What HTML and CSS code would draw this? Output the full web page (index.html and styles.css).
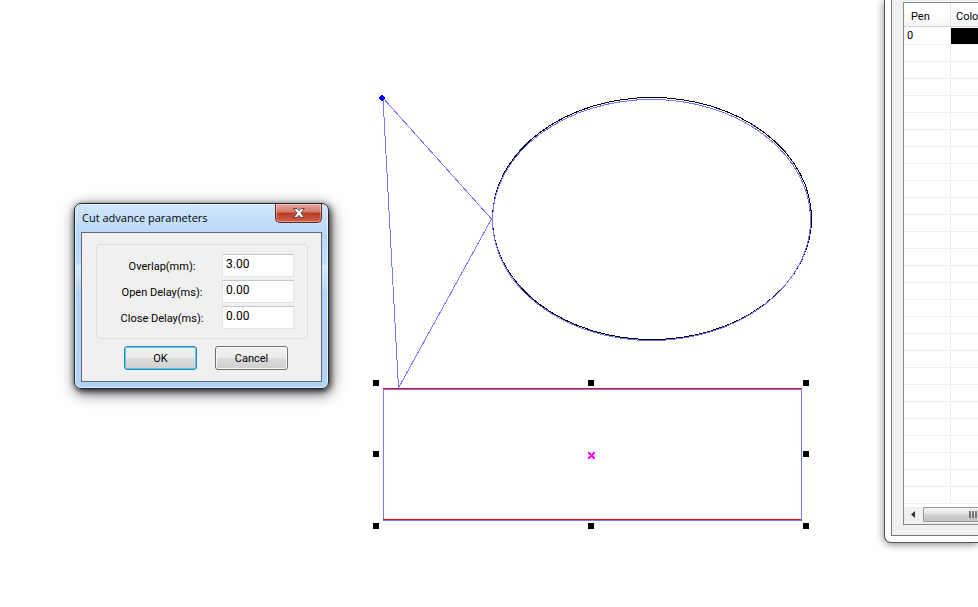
FILE: index.html
```html
<!DOCTYPE html>
<html lang="en">
<head>
<meta charset="utf-8">
<title>Cut advance parameters</title>
<link rel="stylesheet" href="styles.css">
</head>
<body>
<main class="workspace">
  <svg class="drawing" shape-rendering="crispEdges" fill="none" aria-label="Drawing">
    <ellipse cx="652" cy="218.500" rx="159.500" ry="121" stroke="#000"/>
    <ellipse cx="651.500" cy="220" rx="159" ry="120.500" stroke="#7878ff"/>
    <path d="M383 98L491.500 219L398.500 388L383 98" stroke="#7878ff"/>
    <path d="M383.500 389.500H801.500V520.500H383.500Z" stroke="#7878ff"/>
    <path d="M383 388.500H802M383 519.500H801" stroke="#f00"/>
    <path d="M381 95h2v1h1v1h1v2h-1v1h-1v1h-2v-1h-1v-1h-1v-2h1v-1h1z" fill="#00f"/>
    <path fill="#000" d="M373 380h6v6h-6zM588 380h6v6h-6zM803 380h6v6h-6zM373 451h6v6h-6zM803 451h6v6h-6zM373 523h6v6h-6zM588 523h6v6h-6zM803 523h6v6h-6z"/>
    <path fill="#f0f" d="M588 452h2v1h1v1h1v-1h1v-1h2v2h-1v1h-1v1h1v1h1v2h-2v-1h-1v-1h-1v1h-1v1h-2v-2h1v-1h1v-1h-1v-1h-1z"/>
  </svg>

  <form class="dialog" role="dialog" aria-labelledby="dialog-title">
    <header class="titlebar">
      <h1 class="title" id="dialog-title">Cut advance parameters</h1>
      <button class="close" type="button" aria-label="Close">
        <svg width="14" height="10" viewBox="0 0 14 10"><path d="M1.500 .5h3.500L7 2.700 9 .5h3.500L9 5l3.500 4.500H9L7 7.300 5 9.500H1.500L5 5z" fill="#fff" stroke="#5a4448"/></svg>
      </button>
    </header>
    <div class="client">
      <div class="group">
        <label for="overlap">Overlap(mm):</label>
        <input id="overlap" type="text" value="3.00">
        <label for="open-delay">Open Delay(ms):</label>
        <input id="open-delay" type="text" value="0.00">
        <label for="close-delay">Close Delay(ms):</label>
        <input id="close-delay" type="text" value="0.00">
      </div>
      <div class="actions">
        <button class="button primary" type="button">OK</button>
        <button class="button" type="button">Cancel</button>
      </div>
    </div>
  </form>

  <aside class="panel">
    <div class="panel-client">
      <div class="list">
        <table class="pens">
          <thead><tr><th class="pen">Pen</th><th>Colo</th></tr></thead>
          <tbody>
            <tr><td>0</td><td><div class="swatch"></div></td></tr>
            <tr><td></td><td></td></tr><tr><td></td><td></td></tr><tr><td></td><td></td></tr>
            <tr><td></td><td></td></tr><tr><td></td><td></td></tr><tr><td></td><td></td></tr>
            <tr><td></td><td></td></tr><tr><td></td><td></td></tr><tr><td></td><td></td></tr>
            <tr><td></td><td></td></tr><tr><td></td><td></td></tr><tr><td></td><td></td></tr>
            <tr><td></td><td></td></tr><tr><td></td><td></td></tr><tr><td></td><td></td></tr>
            <tr><td></td><td></td></tr><tr><td></td><td></td></tr><tr><td></td><td></td></tr>
            <tr><td></td><td></td></tr><tr><td></td><td></td></tr><tr><td></td><td></td></tr>
            <tr><td></td><td></td></tr><tr><td></td><td></td></tr><tr><td></td><td></td></tr>
            <tr><td></td><td></td></tr><tr><td></td><td></td></tr><tr><td></td><td></td></tr>
          </tbody>
        </table>
        <div class="scrollbar">
          <button class="arrow" type="button" aria-label="Scroll left"><svg width="4" height="7" viewBox="0 0 4 7"><path d="M4 0v7L0 3.500z" fill="#333"/></svg></button>
          <div class="thumb"><svg width="12" height="7" viewBox="0 0 12 7" shape-rendering="crispEdges"><path d="M0 0h2v7H0zM3 0h2v7H3zM6 0h2v7H6zM9 0h2v7H9z" fill="#777"/></svg></div>
        </div>
      </div>
    </div>
  </aside>
</main>
</body>
</html>
```
FILE: styles.css
```css
* {
  box-sizing: border-box;
}

body {
  margin: 0;
  background: #fff;
  color: #000;
  font-family: Roboto, "Liberation Sans", Arial, sans-serif;
  font-size: 11px;
}

button,
input {
  font: inherit;
  color: inherit;
}

.workspace {
  position: relative;
  height: 100vh;
  overflow: hidden;
}

.drawing {
  display: block;
  width: 100%;
  height: 100%;
}

/* Floating dialog */
.dialog {
  position: absolute;
  left: 74px;
  top: 203px;
  width: 255px;
  padding: 0 6px 6px;
  border: 1px solid #1c2733;
  border-radius: 7px;
  background: linear-gradient(#d2e6fb, #b9d8f8 30px, #bddbfa 60px, #d8ebfd 62px, #b4d4f5 90px, #b0d2f4);
  box-shadow: inset 0 0 0 1px #e4f2ff, 1px 2px 6px rgba(0, 0, 0, .8), 2px 4px 16px rgba(0, 0, 0, .6);
}

.titlebar {
  display: flex;
  justify-content: space-between;
  align-items: flex-start;
  height: 28px;
}

.title {
  margin: 0;
  padding: 5px 0 0 1px;
  font: 11px/18px "Open Sans", "Segoe UI", sans-serif;
}

.close {
  display: flex;
  align-items: center;
  justify-content: center;
  width: 47px;
  height: 19px;
  padding: 0;
  border: 1px solid #5e2b2f;
  border-top: 0;
  border-radius: 0 0 5px 5px;
  background: linear-gradient(#e3a89c, #d4796a 45%, #bb3a25 50%, #d0624a);
  box-shadow: inset 0 0 0 1px rgba(255, 255, 255, .35);
}

.client {
  padding: 11px 13px 11px 14px;
  border: 1px solid #606a76;
  background: #f0f0f0;
}

.group {
  display: grid;
  grid-template-columns: 1fr 72px;
  column-gap: 8px;
  row-gap: 3px;
  padding: 9px 13px 9px 13px;
  border: 1px solid #d5dfe5;
  border-radius: 3px;
}

.group label {
  padding-top: 3px;
  line-height: 20px;
  text-align: center;
  white-space: nowrap;
}

.group input {
  width: 100%;
  height: 23px;
  padding: 0 3px 3px;
  border: 1px solid #e2e3ea;
  border-top-color: #c4c6ca;
  background: #fff;
  font-size: 12px;
}

.actions {
  display: flex;
  justify-content: flex-end;
  gap: 18px;
  padding: 7px 20px 0 0;
}

.button {
  width: 73px;
  height: 24px;
  padding: 0;
  border: 1px solid #707070;
  border-radius: 3px;
  background: linear-gradient(#f2f2f2, #ebebeb 48%, #dddddd 50%, #cfcfcf);
  box-shadow: inset 0 0 0 1px #fafafa;
}

.primary {
  border-color: #3c7fb1;
  box-shadow: inset 0 0 0 1px #48d0f5;
}

/* Docked pen list, cut off by the window edge */
.panel {
  position: absolute;
  top: 0;
  right: 0;
  width: 94px;
  padding: 0 0 6px 6px;
  border: solid #555;
  border-width: 0 0 1px 1px;
  border-radius: 0 0 0 7px;
  background: #fff;
  box-shadow: 0 1px 8px rgba(0, 0, 0, .5);
}

.panel-client {
  padding: 2px 0 10px 11px;
  border: solid #777;
  border-width: 0 0 1px 1px;
  background: #f0f0f0;
}

.list {
  overflow: hidden;
  border: 1px solid #828790;
  border-right: 0;
  background: #fff;
}

.pens {
  width: 100%;
  table-layout: fixed;
  border-collapse: separate;
  border-spacing: 0;
}

.pens th {
  height: 24px;
  padding: 4px 0 0 5px;
  border-bottom: 1px solid #d5d5d5;
  background: linear-gradient(#fff 50%, #f4f5f7);
  font-weight: normal;
  text-align: left;
}

.pens .pen {
  width: 47px;
  padding-left: 7px;
  border-right: 1px solid #e0e3e8;
}

.pens td {
  height: 17px;
  padding: 0 0 0 3px;
  border-bottom: 1px solid #eee;
  line-height: 16px;
}

.pens td:first-child {
  border-right: 1px solid #eee;
}

.pens td:last-child {
  padding: 0;
}

.swatch {
  height: 16px;
  margin-top: 1px;
  background: #000;
}

.scrollbar {
  display: flex;
  height: 17px;
  margin-top: 3px;
  background: #f0f0f0;
}

.arrow {
  display: flex;
  flex: none;
  align-items: center;
  justify-content: center;
  width: 19px;
  padding: 0 2px 2px 0;
  border: 0;
  background: none;
}

.thumb {
  display: flex;
  flex: 1;
  align-items: center;
  justify-content: flex-end;
  height: 15px;
  border: 1px solid #979797;
  border-right: 0;
  border-radius: 2px 0 0 2px;
  background: linear-gradient(#f4f4f4, #e6e6e6 48%, #d2d2d2 50%, #c4c4c4);
}

.thumb svg {
  flex: none;
  margin-right: -3px;
}
```
